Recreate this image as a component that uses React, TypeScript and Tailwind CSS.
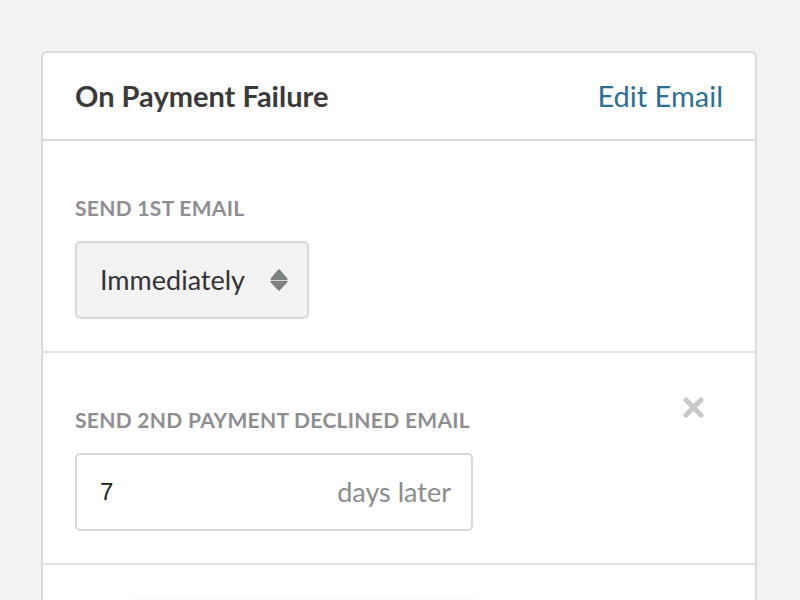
import { useState } from "react";

const font = { fontFamily: "Lato, 'Open Sans', sans-serif" };

function SortIcon() {
  return (
    <svg width="18" height="22" viewBox="0 0 18 22" className="shrink-0">
      <path d="M7.6 1.2a1.8 1.8 0 0 1 2.8 0l7 8.2c.6.7.1 1.6-.8 1.6H1.4c-.9 0-1.4-.9-.8-1.6z" fill="#7c827e" />
      <path d="M7.6 20.8a1.8 1.8 0 0 0 2.8 0l7-7.6c.6-.7.1-1.4-.8-1.4H1.4c-.9 0-1.4.7-.8 1.4z" fill="#7c827e" />
    </svg>
  );
}

function CloseIcon() {
  return (
    <svg width="21" height="21" viewBox="0 0 21 21">
      <path d="M3 3l15 15M18 3L3 18" stroke="#c9c9c9" strokeWidth="5" strokeLinecap="round" />
    </svg>
  );
}

export default function App() {
  const [delay, setDelay] = useState("7");

  return (
    <div className="min-h-screen w-full overflow-hidden bg-[#f2f2f2]" style={font}>
      <div className="ml-[41px] mt-[51px] w-[716px] rounded-t-[6px] border-2 border-b-0 border-[#dadada] bg-white">
        {/* Header */}
        <div className="flex h-[88px] items-center justify-between border-b-2 border-[#dcdcdc] px-[32px]">
          <h2 className="text-[29px] font-bold text-[#3a3a3a]">On Payment Failure</h2>
          <a href="#" className="text-[29px] text-[#2b6f98]">Edit Email</a>
        </div>

        {/* First email */}
        <div className="h-[212px] border-b-2 border-[#e3e3e3] px-[32px] pt-[55px]">
          <div className="h-[24px] text-[21px] font-bold leading-[24px] tracking-[0.3px] text-[#8e8e92]">
            SEND 1ST EMAIL
          </div>
          <button className="mt-[21px] flex h-[78px] w-[234px] items-center justify-between rounded-[5px] border-2 border-[#d8d8d8] bg-[#f2f2f2] pl-[23px] pr-[19px]">
            <span className="text-[27px] text-[#333]">Immediately</span>
            <SortIcon />
          </button>
        </div>

        {/* Second email */}
        <div className="relative h-[212px] border-b-2 border-[#e3e3e3] px-[32px] pt-[55px]">
          <button className="absolute right-[51px] top-[44px]" title="Remove">
            <CloseIcon />
          </button>
          <div className="h-[24px] text-[21px] font-bold leading-[24px] tracking-[0.3px] text-[#8e8e92]">
            SEND 2ND PAYMENT DECLINED EMAIL
          </div>
          <div className="mt-[21px] flex h-[78px] w-[398px] items-center rounded-[5px] border-2 border-[#d8d8d8] bg-white pl-[23px] pr-[20px]">
            <input
              value={delay}
              onChange={(e) => setDelay(e.target.value)}
              className="min-w-0 flex-1 bg-transparent text-[24px] text-[#222] outline-none"
              style={{ fontFamily: "'Liberation Sans', Arial, sans-serif" }}
            />
            <span className="text-[27px] text-[#8c8c8c]">days later</span>
          </div>
        </div>

        {/* Next row (cut off) */}
        <div className="h-[60px] px-[88px] pt-[26px]">
          <div className="h-[10px] w-[348px] rounded-t-[6px] bg-gradient-to-b from-white to-[#fafafa]" />
        </div>
      </div>
    </div>
  );
}
